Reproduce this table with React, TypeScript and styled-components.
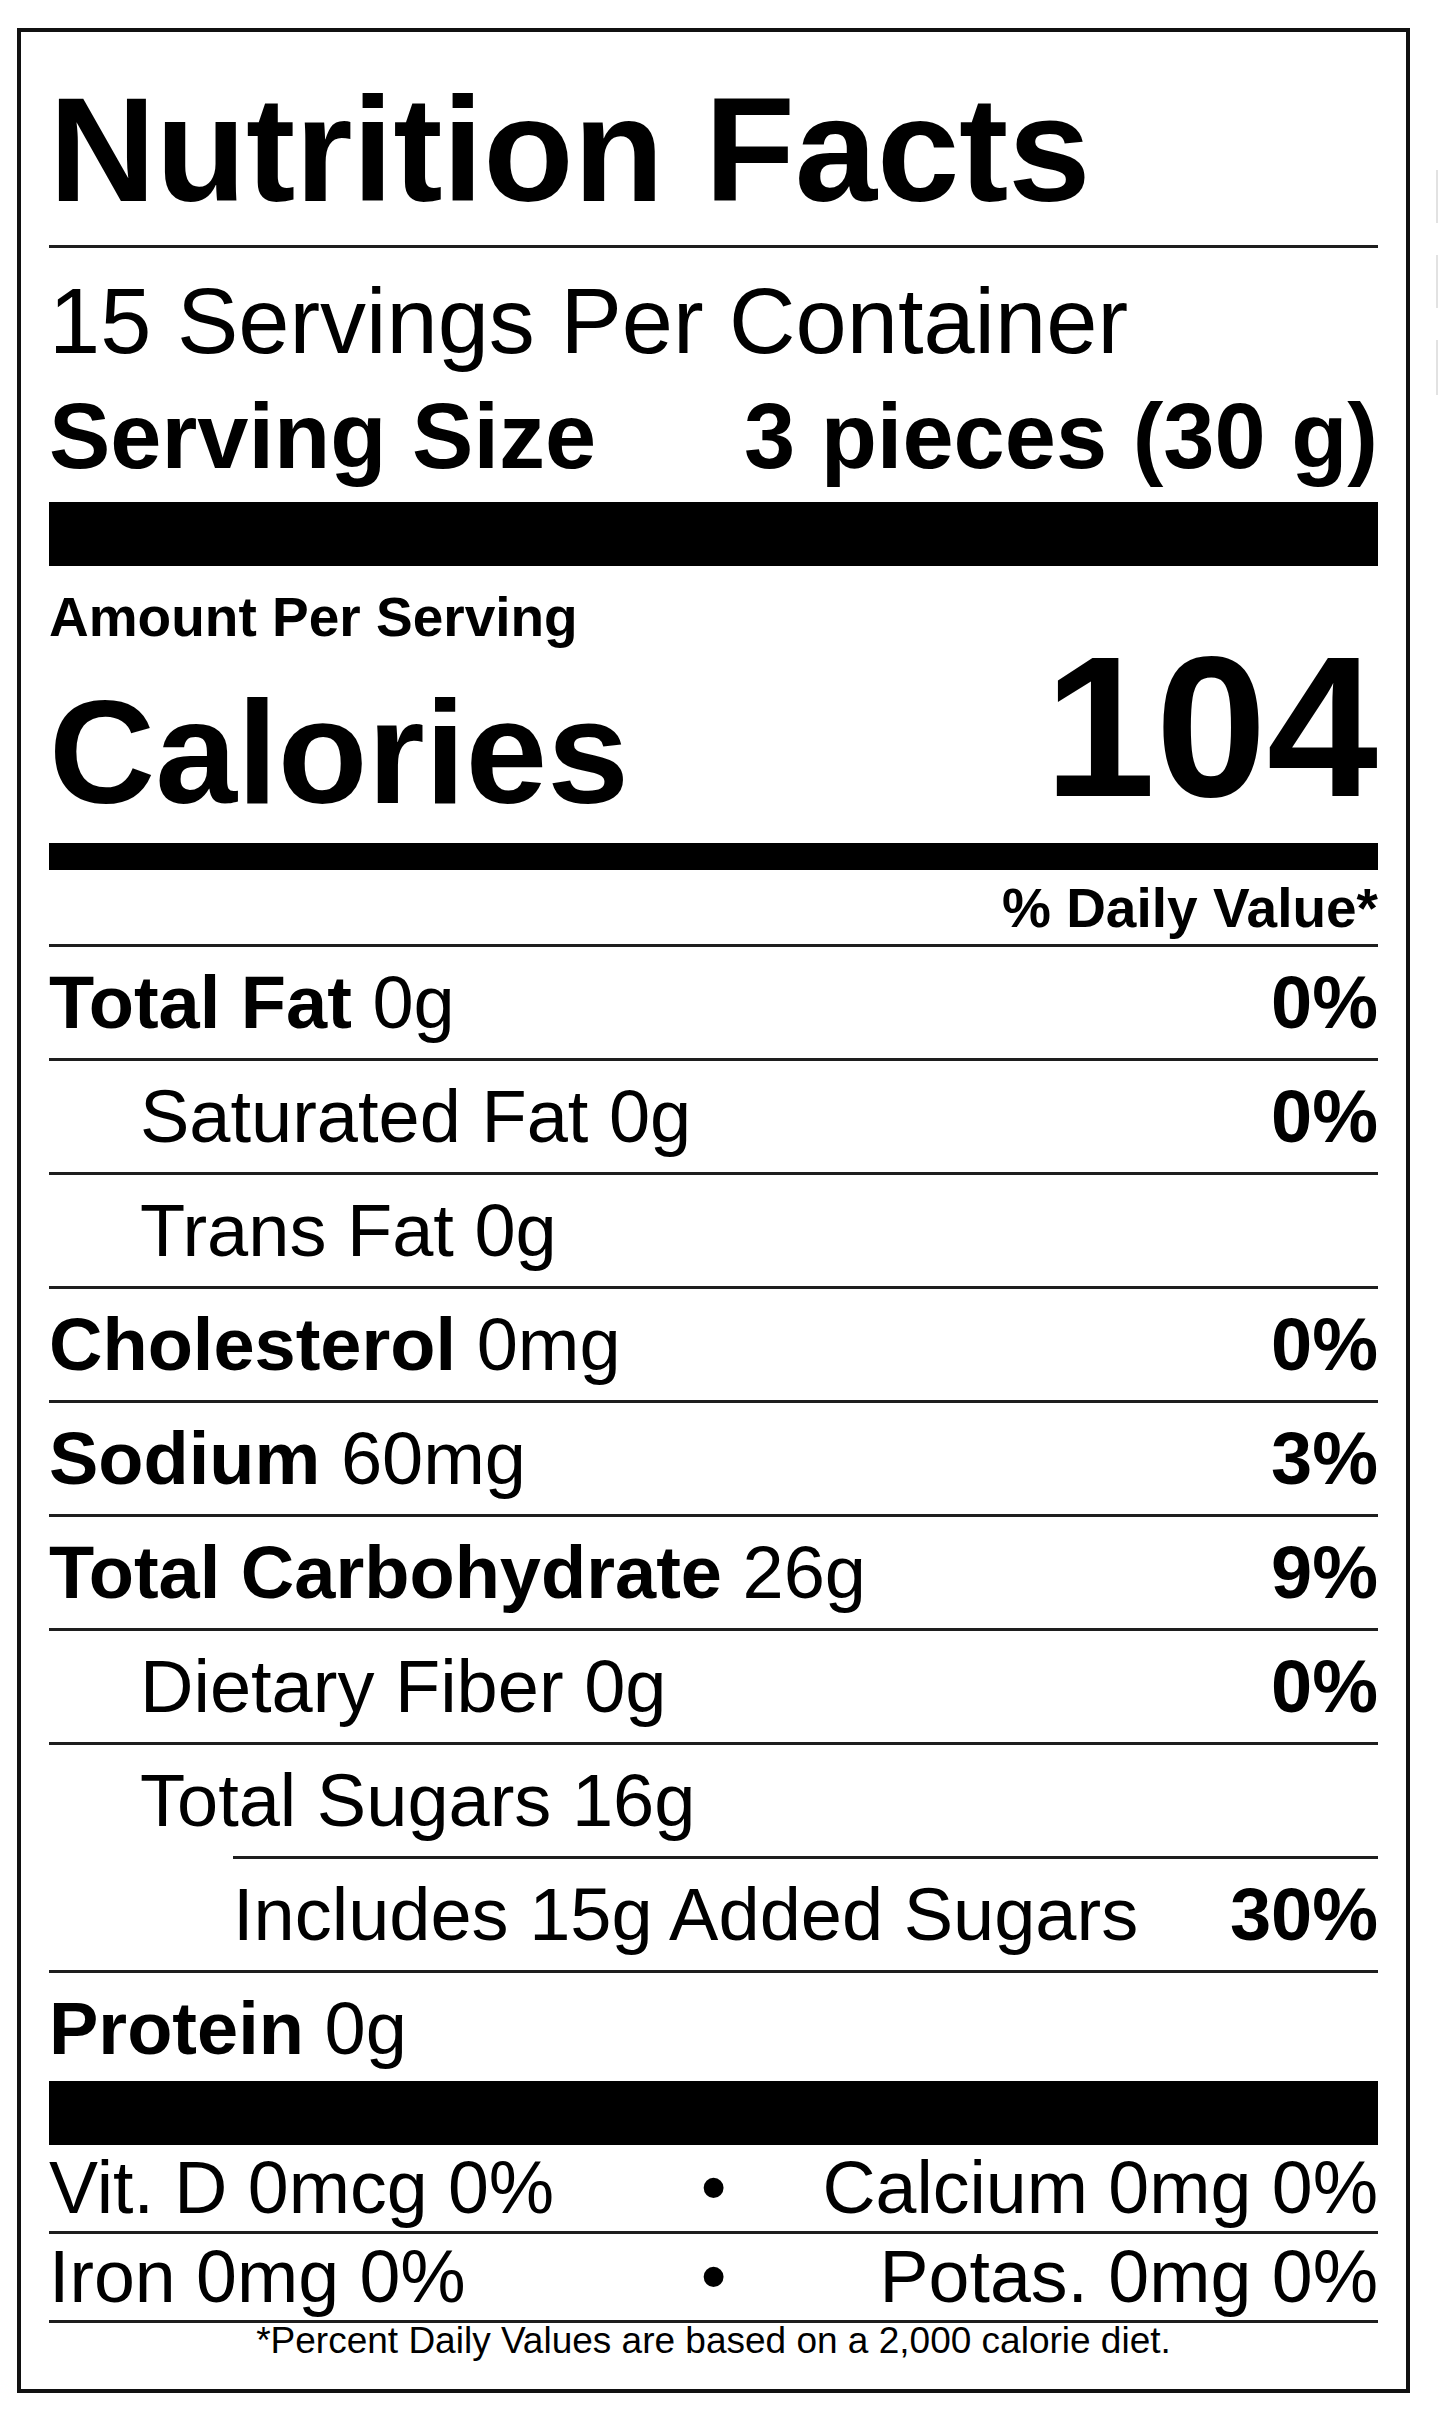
import React from "react";
import styled, { createGlobalStyle } from "styled-components";

const GlobalStyle = createGlobalStyle`
  html, body {
    margin: 0;
    padding: 0;
    background: #ffffff;
  }
  body {
    font-family: "Liberation Sans", Arial, Helvetica, sans-serif;
    color: #000000;
  }
  * {
    box-sizing: border-box;
  }
`;

const Page = styled.div`
  width: 1445px;
  min-height: 2423px;
  display: flex;
  align-items: flex-start;
  padding: 28px 0 0 17px;
  background: #ffffff;
`;

const Label = styled.section`
  width: 1393px;
  border: 4px solid #111111;
  padding: 28px 28px 31px;
  display: flex;
  flex-direction: column;
`;

const Title = styled.h1`
  margin: 0 0 5px;
  font-size: 148px;
  font-weight: 700;
  line-height: 180px;
  letter-spacing: -0.2px;
  white-space: nowrap;
`;

const Rule = styled.div<{ $weight: number; $inset?: number }>`
  height: ${(p) => p.$weight}px;
  margin-left: ${(p) => p.$inset ?? 0}px;
  background: ${(p) => (p.$weight > 3 ? "#000000" : "#1e1e1e")};
  flex-shrink: 0;
`;

const ThickBar = styled(Rule)<{ $gap?: number }>`
  margin-top: ${(p) => p.$gap ?? 0}px;
`;

const ServingsLine = styled.div`
  margin-top: 18px;
  font-size: 92px;
  line-height: 110px;
  white-space: nowrap;
`;

const ServingSizeRow = styled.div`
  margin-top: 5px;
  display: flex;
  justify-content: space-between;
  font-size: 92px;
  font-weight: 700;
  line-height: 110px;
  white-space: nowrap;
`;

const AmountLabel = styled.div`
  margin-top: 24px;
  font-size: 55px;
  font-weight: 700;
  line-height: 55px;
`;

const CaloriesRow = styled.div`
  margin-top: 7px;
  display: flex;
  justify-content: space-between;
  align-items: flex-end;
  font-weight: 700;
`;

const CaloriesLabel = styled.div`
  font-size: 147px;
  line-height: 100px;
`;

const CaloriesValue = styled.div`
  font-size: 200px;
  line-height: 150px;
`;

const DailyValueHeader = styled.div`
  margin: 11px 0 9px;
  text-align: right;
  font-size: 55px;
  font-weight: 700;
  line-height: 54px;
`;

const NutrientRow = styled.div<{ $indent: number; $ruleInset: number }>`
  height: 114px;
  margin-left: ${(p) => p.$ruleInset}px;
  padding-left: ${(p) => p.$indent}px;
  border-top: 3px solid #1e1e1e;
  display: flex;
  justify-content: space-between;
  align-items: baseline;
  font-size: 74px;
  line-height: 111px;
  white-space: nowrap;
`;

const NutrientName = styled.span<{ $bold: boolean }>`
  font-weight: ${(p) => (p.$bold ? 700 : 400)};
`;

const NutrientAmount = styled.span`
  font-weight: 400;
`;

const Percent = styled.span`
  font-weight: 700;
`;

const VitaminRow = styled.div`
  height: 89px;
  border-bottom: 3px solid #1e1e1e;
  display: grid;
  grid-template-columns: 1fr auto 1fr;
  align-items: baseline;
  font-size: 73.5px;
  line-height: 86px;
  white-space: nowrap;
`;

const VitaminLeft = styled.span`
  justify-self: start;
`;

const VitaminRight = styled.span`
  justify-self: end;
`;

const Bullet = styled.span`
  justify-self: center;
`;

const Footnote = styled.div`
  text-align: center;
  font-size: 37px;
  line-height: 35px;
  white-space: nowrap;
`;

const SideMarks = styled.div`
  margin: 142px 0 0 26px;
  display: flex;
  flex-direction: column;
  gap: 32px;
`;

const SideMark = styled.div<{ $h: number }>`
  width: 2px;
  height: ${(p) => p.$h}px;
  background: #e2e2e2;
`;

type Nutrient = {
  name: string;
  amount: string;
  percent?: string;
  bold: boolean;
  level: 0 | 1 | 2;
};

const nutrients: Nutrient[] = [
  { name: "Total Fat", amount: "0g", percent: "0%", bold: true, level: 0 },
  { name: "Saturated Fat", amount: "0g", percent: "0%", bold: false, level: 1 },
  { name: "Trans Fat", amount: "0g", bold: false, level: 1 },
  { name: "Cholesterol", amount: "0mg", percent: "0%", bold: true, level: 0 },
  { name: "Sodium", amount: "60mg", percent: "3%", bold: true, level: 0 },
  { name: "Total Carbohydrate", amount: "26g", percent: "9%", bold: true, level: 0 },
  { name: "Dietary Fiber", amount: "0g", percent: "0%", bold: false, level: 1 },
  { name: "Total Sugars", amount: "16g", bold: false, level: 1 },
  { name: "Includes 15g Added Sugars", amount: "", percent: "30%", bold: false, level: 2 },
  { name: "Protein", amount: "0g", bold: true, level: 0 },
];

const vitamins: [string, string][] = [
  ["Vit. D 0mcg 0%", "Calcium 0mg 0%"],
  ["Iron 0mg 0%", "Potas. 0mg 0%"],
];

export default function App() {
  return (
    <>
      <GlobalStyle />
      <Page>
        <Label>
          <Title>Nutrition Facts</Title>
          <Rule $weight={3} />
          <ServingsLine>15 Servings Per Container</ServingsLine>
          <ServingSizeRow>
            <span>Serving Size</span>
            <span>3 pieces (30 g)</span>
          </ServingSizeRow>
          <ThickBar $weight={64} $gap={11} />
          <AmountLabel>Amount Per Serving</AmountLabel>
          <CaloriesRow>
            <CaloriesLabel>Calories</CaloriesLabel>
            <CaloriesValue>104</CaloriesValue>
          </CaloriesRow>
          <ThickBar $weight={27} $gap={41} />
          <DailyValueHeader>% Daily Value*</DailyValueHeader>
          {nutrients.map((n) => (
            <NutrientRow
              key={n.name}
              $indent={n.level === 1 ? 91 : 0}
              $ruleInset={n.level === 2 ? 184 : 0}
            >
              <span>
                <NutrientName $bold={n.bold}>{n.name}</NutrientName>
                {n.amount && <NutrientAmount> {n.amount}</NutrientAmount>}
              </span>
              {n.percent && <Percent>{n.percent}</Percent>}
            </NutrientRow>
          ))}
          <ThickBar $weight={64} $gap={-3} />
          {vitamins.map(([left, right]) => (
            <VitaminRow key={left}>
              <VitaminLeft>{left}</VitaminLeft>
              <Bullet>•</Bullet>
              <VitaminRight>{right}</VitaminRight>
            </VitaminRow>
          ))}
          <Footnote>*Percent Daily Values are based on a 2,000 calorie diet.</Footnote>
        </Label>
        <SideMarks>
          <SideMark $h={53} />
          <SideMark $h={53} />
          <SideMark $h={55} />
        </SideMarks>
      </Page>
    </>
  );
}
